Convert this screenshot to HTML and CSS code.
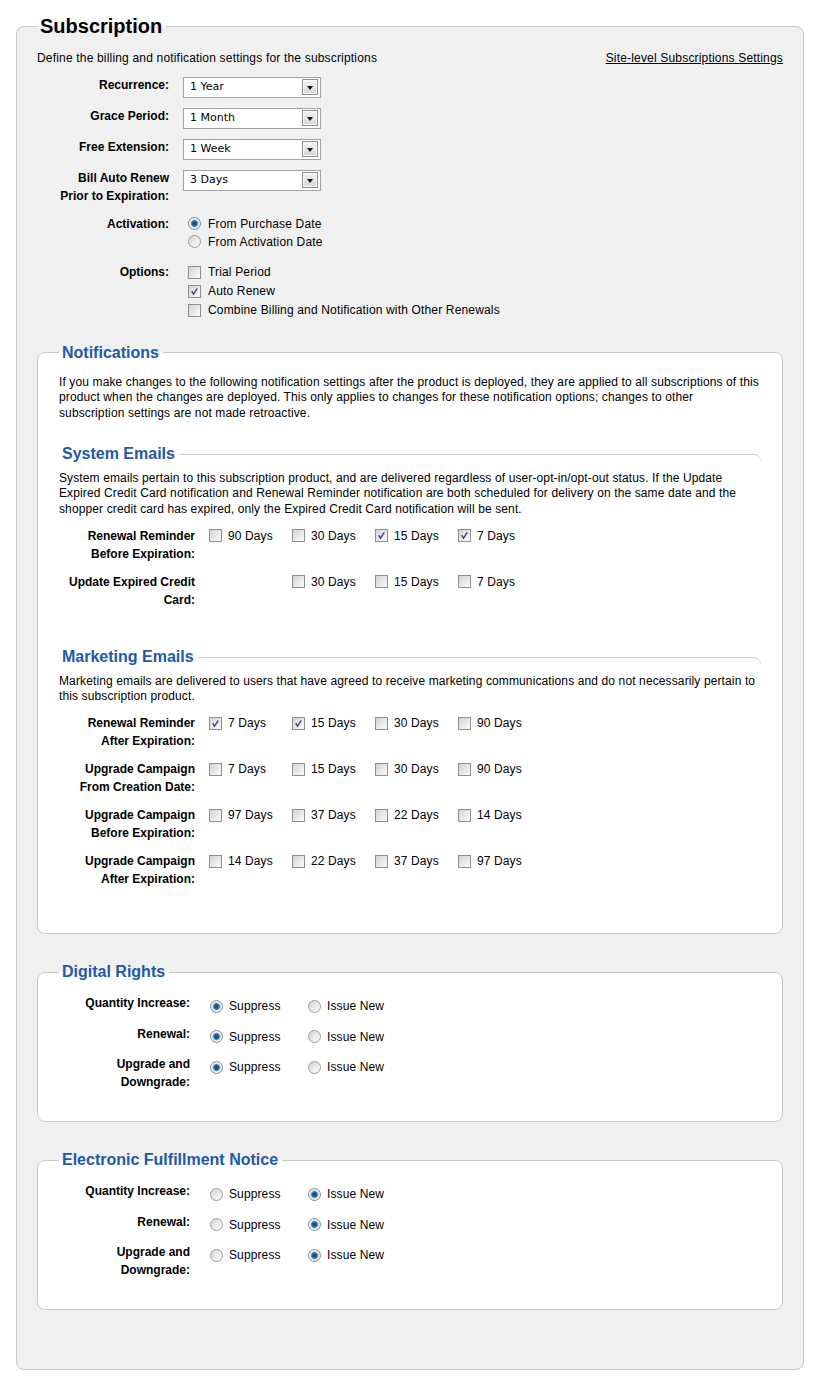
FILE: index.html
```html
<!DOCTYPE html>
<html>
<head>
<meta charset="utf-8">
<title>Subscription</title>
<link rel="stylesheet" href="styles.css">
</head>
<body>
<div class="page">
  <fieldset class="panel outer">
    <legend class="title">Subscription</legend>
    <div class="intro">
      <span>Define the billing and notification settings for the subscriptions</span>
      <a href="#" class="link">Site-level Subscriptions Settings</a>
    </div>

    <div class="form-grid">
      <div class="lbl">Recurrence:</div>
      <div class="ctl"><div class="select"><span>1 Year</span><span class="arrow"></span></div></div>

      <div class="lbl">Grace Period:</div>
      <div class="ctl"><div class="select"><span>1 Month</span><span class="arrow"></span></div></div>

      <div class="lbl">Free Extension:</div>
      <div class="ctl"><div class="select"><span>1 Week</span><span class="arrow"></span></div></div>

      <div class="lbl">Bill Auto Renew<br>Prior to Expiration:</div>
      <div class="ctl"><div class="select"><span>3 Days</span><span class="arrow"></span></div></div>

      <div class="lbl mt1">Activation:</div>
      <div class="ctl stack mt1">
        <label class="opt"><span class="rd on"></span>From Purchase Date</label>
        <label class="opt"><span class="rd"></span>From Activation Date</label>
      </div>

      <div class="lbl mt3">Options:</div>
      <div class="ctl stack tall mt3">
        <label class="opt"><span class="cb"></span>Trial Period</label>
        <label class="opt"><span class="cb"><svg viewBox="0 0 13 13"><path d="M3.2 6.2 L5.4 9.6 L9.8 2.8"/></svg></span>Auto Renew</label>
        <label class="opt"><span class="cb"></span>Combine Billing and Notification with Other Renewals</label>
      </div>
    </div>

    <fieldset class="panel box notif">
      <legend class="sec">Notifications</legend>
      <p class="txt">If you make changes to the following notification settings after the product is deployed, they are applied to all subscriptions of this product when the changes are deployed. This only applies to changes for these notification options; changes to other subscription settings are not made retroactive.</p>

      <section class="sub">
        <div class="subhead"><h3>System Emails</h3><span class="rule"></span></div>
        <p class="txt">System emails pertain to this subscription product, and are delivered regardless of user-opt-in/opt-out status. If the Update Expired Credit Card notification and Renewal Reminder notification are both scheduled for delivery on the same date and the shopper credit card has expired, only the Expired Credit Card notification will be sent.</p>
        <div class="ngrid">
          <div class="nlbl">Renewal Reminder<br>Before Expiration:</div>
          <label class="opt"><span class="cb"></span>90 Days</label>
          <label class="opt"><span class="cb"></span>30 Days</label>
          <label class="opt"><span class="cb"><svg viewBox="0 0 13 13"><path d="M3.2 6.2 L5.4 9.6 L9.8 2.8"/></svg></span>15 Days</label>
          <label class="opt"><span class="cb"><svg viewBox="0 0 13 13"><path d="M3.2 6.2 L5.4 9.6 L9.8 2.8"/></svg></span>7 Days</label>

          <div class="nlbl">Update Expired Credit<br>Card:</div>
          <div class="opt"></div>
          <label class="opt"><span class="cb"></span>30 Days</label>
          <label class="opt"><span class="cb"></span>15 Days</label>
          <label class="opt"><span class="cb"></span>7 Days</label>
        </div>
      </section>

      <section class="sub mkt">
        <div class="subhead"><h3>Marketing Emails</h3><span class="rule"></span></div>
        <p class="txt">Marketing emails are delivered to users that have agreed to receive marketing communications and do not necessarily pertain to this subscription product.</p>
        <div class="ngrid">
          <div class="nlbl">Renewal Reminder<br>After Expiration:</div>
          <label class="opt"><span class="cb"><svg viewBox="0 0 13 13"><path d="M3.2 6.2 L5.4 9.6 L9.8 2.8"/></svg></span>7 Days</label>
          <label class="opt"><span class="cb"><svg viewBox="0 0 13 13"><path d="M3.2 6.2 L5.4 9.6 L9.8 2.8"/></svg></span>15 Days</label>
          <label class="opt"><span class="cb"></span>30 Days</label>
          <label class="opt"><span class="cb"></span>90 Days</label>

          <div class="nlbl">Upgrade Campaign<br>From Creation Date:</div>
          <label class="opt"><span class="cb"></span>7 Days</label>
          <label class="opt"><span class="cb"></span>15 Days</label>
          <label class="opt"><span class="cb"></span>30 Days</label>
          <label class="opt"><span class="cb"></span>90 Days</label>

          <div class="nlbl">Upgrade Campaign<br>Before Expiration:</div>
          <label class="opt"><span class="cb"></span>97 Days</label>
          <label class="opt"><span class="cb"></span>37 Days</label>
          <label class="opt"><span class="cb"></span>22 Days</label>
          <label class="opt"><span class="cb"></span>14 Days</label>

          <div class="nlbl">Upgrade Campaign<br>After Expiration:</div>
          <label class="opt"><span class="cb"></span>14 Days</label>
          <label class="opt"><span class="cb"></span>22 Days</label>
          <label class="opt"><span class="cb"></span>37 Days</label>
          <label class="opt"><span class="cb"></span>97 Days</label>
        </div>
      </section>
    </fieldset>

    <fieldset class="panel box rights">
      <legend class="sec">Digital Rights</legend>
      <div class="rgrid">
        <div class="rlbl">Quantity Increase:</div>
        <label class="opt ro"><span class="rd on"></span>Suppress</label>
        <label class="opt ro"><span class="rd"></span>Issue New</label>

        <div class="rlbl">Renewal:</div>
        <label class="opt ro"><span class="rd on"></span>Suppress</label>
        <label class="opt ro"><span class="rd"></span>Issue New</label>

        <div class="rlbl">Upgrade and<br>Downgrade:</div>
        <label class="opt ro"><span class="rd on"></span>Suppress</label>
        <label class="opt ro"><span class="rd"></span>Issue New</label>
      </div>
    </fieldset>

    <fieldset class="panel box rights">
      <legend class="sec">Electronic Fulfillment Notice</legend>
      <div class="rgrid">
        <div class="rlbl">Quantity Increase:</div>
        <label class="opt ro"><span class="rd"></span>Suppress</label>
        <label class="opt ro"><span class="rd on"></span>Issue New</label>

        <div class="rlbl">Renewal:</div>
        <label class="opt ro"><span class="rd"></span>Suppress</label>
        <label class="opt ro"><span class="rd on"></span>Issue New</label>

        <div class="rlbl">Upgrade and<br>Downgrade:</div>
        <label class="opt ro"><span class="rd"></span>Suppress</label>
        <label class="opt ro"><span class="rd on"></span>Issue New</label>
      </div>
    </fieldset>
  </fieldset>
</div>
</body>
</html>
```

FILE: styles.css
```css
html, body {
  margin: 0;
  padding: 0;
  background: #ffffff;
}

body {
  font-family: "Liberation Sans", Arial, sans-serif;
  font-size: 12px;
  letter-spacing: 0.12px;
  color: #000;
}

.page {
  padding: 15px 16px 0 16px;
}

.panel {
  margin: 0;
  min-width: 0;
  border: 1px solid #c8c8c8;
  border-radius: 8px;
}

.outer {
  background: #f0f0f0;
  padding: 13px 20px 59px 20px;
}

.title {
  font-size: 20px;
  font-weight: bold;
  line-height: 23px;
  letter-spacing: 0;
  padding: 0 4px 0 3px;
  color: #000;
}

.intro {
  display: flex;
  justify-content: space-between;
  align-items: center;
  line-height: 15px;
  letter-spacing: 0.18px;
}

.link {
  color: #000;
  text-decoration: underline;
}

.form-grid {
  display: grid;
  grid-template-columns: 132px 1fr;
  column-gap: 14px;
  row-gap: 9px;
  margin-top: 9.5px;
}

.lbl {
  font-weight: bold;
  text-align: right;
  line-height: 18px;
  letter-spacing: 0;
}

.mt1 {
  margin-top: 1px;
}

.mt3 {
  margin-top: 3px;
}

.ctl {
  line-height: 18px;
}

.select {
  box-sizing: border-box;
  width: 138px;
  height: 21px;
  margin-top: 1px;
  border: 1px solid #a2a2a2;
  background: #fff;
  display: flex;
  align-items: center;
  justify-content: space-between;
  padding: 0 2px 0 6px;
  font-family: "DejaVu Sans", Tahoma, sans-serif;
  font-size: 11px;
  letter-spacing: 0;
}

.arrow {
  box-sizing: border-box;
  width: 16px;
  height: 16px;
  border: 1px solid #8d8d8d;
  background: linear-gradient(#f2f2f2, #d6d6d6);
  box-shadow: inset 0 0 0 1px #fbfbfb;
  display: flex;
  align-items: center;
  justify-content: center;
}

.arrow::after {
  content: "";
  margin-top: 2px;
  border-left: 3.5px solid transparent;
  border-right: 3.5px solid transparent;
  border-top: 4px solid #111;
}

.stack {
  display: flex;
  flex-direction: column;
  padding-left: 5px;
  letter-spacing: 0.16px;
}

.opt {
  display: flex;
  align-items: center;
  gap: 6px;
  height: 18px;
  line-height: 18px;
  white-space: nowrap;
}

.stack .opt {
  gap: 7px;
  height: 18px;
}

.stack.tall .opt {
  height: 19px;
}

.cb {
  box-sizing: border-box;
  width: 13px;
  height: 13px;
  flex: none;
  border: 1px solid #8e8f8f;
  background: linear-gradient(135deg, #d3d3d3 0%, #e9e9e9 55%, #fbfbfb 100%);
  display: block;
}

.cb svg {
  display: block;
  width: 11px;
  height: 11px;
}

.cb svg path {
  fill: none;
  stroke: #3d4d82;
  stroke-width: 1.7;
}

.rd {
  box-sizing: border-box;
  width: 13px;
  height: 13px;
  flex: none;
  border-radius: 50%;
  border: 1px solid #9a9a9a;
  background: linear-gradient(135deg, #d2d2d2 0%, #ececec 55%, #fdfdfd 100%);
}

.rd.on {
  border-color: #7f8c96;
  background: radial-gradient(circle at 50% 50%, #14456e 0, #1f5d8f 2px, #4f88b4 3px, #bcd6e8 3.8px, #eef2f5 4.6px, #f6f6f6 100%);
}

.box {
  background: #fff;
}

.sec {
  font-size: 16px;
  font-weight: bold;
  line-height: 18px;
  letter-spacing: 0;
  color: #2358a6;
  padding: 0 4px 0 3px;
}

.notif {
  margin-top: 24px;
  padding: 13px 20px 45px 21px;
}

.txt {
  margin: 0;
  line-height: 15.5px;
}

.sub {
  margin-top: 23.5px;
}

.sub.mkt {
  margin-top: 39px;
}

.subhead {
  display: flex;
  align-items: flex-start;
  margin-right: 1px;
}

.subhead h3 {
  margin: 0;
  font-size: 16px;
  font-weight: bold;
  line-height: 18px;
  letter-spacing: 0;
  color: #2358a6;
  padding: 0 4px 0 3px;
}

.rule {
  flex: 1;
  height: 6px;
  margin-top: 9px;
  border-top: 1px solid #cfcfcf;
  border-right: 1px solid #e2e2e2;
  border-top-right-radius: 8px;
}

.subhead + .txt {
  margin-top: 8px;
}

.ngrid {
  display: grid;
  grid-template-columns: 152px repeat(4, 83px);
  row-gap: 10px;
  margin-top: 9.5px;
}

.nlbl {
  font-weight: bold;
  text-align: right;
  line-height: 18px;
  letter-spacing: 0;
  padding-right: 16px;
}

.ngrid .opt {
  margin-left: -2px;
}

.rights {
  margin-top: 29px;
  padding: 13px 21px 30px 21px;
}

.rgrid {
  display: grid;
  grid-template-columns: 151px 98px 98px;
  row-gap: 9.5px;
}

.rlbl {
  font-weight: bold;
  text-align: right;
  line-height: 18px;
  letter-spacing: 0;
  padding-right: 20px;
}

.opt.ro {
  margin-top: 3px;
}
```
